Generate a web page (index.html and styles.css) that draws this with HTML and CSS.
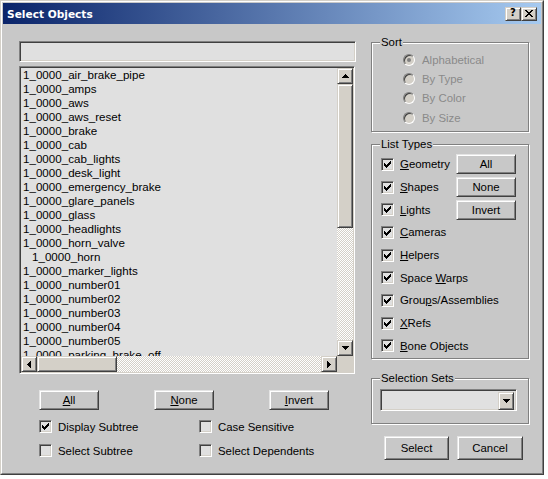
FILE: index.html
```html
<!DOCTYPE html>
<html>
<head>
<meta charset="utf-8">
<title>Select Objects</title>
<link rel="stylesheet" href="styles.css">
</head>
<body>
<div class="window">
  <div class="frame">
    <div class="titlebar">
      <span class="title">Select Objects</span>
      <span class="tbtn help">?</span>
      <span class="tbtn close"><svg width="8" height="7" viewBox="0 0 8 7"><path d="M0 0h2v1H0zM6 0h2v1H6zM1 1h2v1H1zM5 1h2v1H5zM2 2h4v1H2zM3 3h2v1H3zM2 4h4v1H2zM1 5h2v1H1zM5 5h2v1H5zM0 6h2v1H0zM6 6h2v1H6z" fill="#000"/></svg></span>
    </div>
    <div class="body">
      <div class="leftcol">
        <div class="edit filter"></div>
        <div class="listbox">
          <div class="items">
            <div class="item">1_0000_air_brake_pipe</div>
            <div class="item">1_0000_amps</div>
            <div class="item">1_0000_aws</div>
            <div class="item">1_0000_aws_reset</div>
            <div class="item">1_0000_brake</div>
            <div class="item">1_0000_cab</div>
            <div class="item">1_0000_cab_lights</div>
            <div class="item">1_0000_desk_light</div>
            <div class="item">1_0000_emergency_brake</div>
            <div class="item">1_0000_glare_panels</div>
            <div class="item">1_0000_glass</div>
            <div class="item">1_0000_headlights</div>
            <div class="item">1_0000_horn_valve</div>
            <div class="item child">1_0000_horn</div>
            <div class="item">1_0000_marker_lights</div>
            <div class="item">1_0000_number01</div>
            <div class="item">1_0000_number02</div>
            <div class="item">1_0000_number03</div>
            <div class="item">1_0000_number04</div>
            <div class="item">1_0000_number05</div>
            <div class="item">1_0000_parking_brake_off</div>
          </div>
          <div class="vscroll">
            <div class="sbtn"><svg width="7" height="4" viewBox="0 0 7 4"><path d="M3 0h1v1H3zM2 1h3v1H2zM1 2h5v1H1zM0 3h7v1H0z" fill="#000"/></svg></div>
            <div class="thumb vthumb"></div>
            <div class="track"></div>
            <div class="sbtn"><svg width="7" height="4" viewBox="0 0 7 4"><path d="M0 0h7v1H0zM1 1h5v1H1zM2 2h3v1H2zM3 3h1v1H3z" fill="#000"/></svg></div>
          </div>
          <div class="hscroll">
            <div class="sbtn"><svg width="4" height="7" viewBox="0 0 4 7"><path d="M3 0h1v7H3zM2 1h1v5H2zM1 2h1v3H1zM0 3h1v1H0z" fill="#000"/></svg></div>
            <div class="thumb hthumb"></div>
            <div class="track"></div>
            <div class="sbtn"><svg width="4" height="7" viewBox="0 0 4 7"><path d="M0 0h1v7H0zM1 1h1v5H1zM2 2h1v3H2zM3 3h1v1H3z" fill="#000"/></svg></div>
          </div>
          <div class="corner"></div>
        </div>
        <div class="btnrow">
          <button class="btn small"><u>A</u>ll</button>
          <button class="btn small"><u>N</u>one</button>
          <button class="btn small"><u>I</u>nvert</button>
        </div>
        <div class="opts">
          <label class="chk"><span class="box"><svg width="7" height="7" viewBox="0 0 7 7"><path d="M0 2h1v3H0zM1 3h1v3H1zM2 4h1v3H2zM3 3h1v3H3zM4 2h1v3H4zM5 1h1v3H5zM6 0h1v3H6z" fill="#000"/></svg></span>Display Subtree</label>
          <label class="chk"><span class="box"></span>Case Sensitive</label>
          <label class="chk"><span class="box"></span>Select Subtree</label>
          <label class="chk"><span class="box"></span>Select Dependents</label>
        </div>
      </div>
      <div class="rightcol">
        <fieldset class="group sort">
          <legend>Sort</legend>
          <div class="sort-body">
            <div class="radio-row"><span class="radio on"><span class="dot"></span></span>Alphabetical</div>
            <div class="radio-row"><span class="radio"></span>By Type</div>
            <div class="radio-row"><span class="radio"></span>By Color</div>
            <div class="radio-row"><span class="radio"></span>By Size</div>
          </div>
        </fieldset>
        <fieldset class="group types">
          <legend>List Types</legend>
          <div class="types-body">
            <label class="chk"><span class="box"><svg width="7" height="7" viewBox="0 0 7 7"><path d="M0 2h1v3H0zM1 3h1v3H1zM2 4h1v3H2zM3 3h1v3H3zM4 2h1v3H4zM5 1h1v3H5zM6 0h1v3H6z" fill="#000"/></svg></span><span><u>G</u>eometry</span></label>
            <button class="btn side">All</button>
            <label class="chk"><span class="box"><svg width="7" height="7" viewBox="0 0 7 7"><path d="M0 2h1v3H0zM1 3h1v3H1zM2 4h1v3H2zM3 3h1v3H3zM4 2h1v3H4zM5 1h1v3H5zM6 0h1v3H6z" fill="#000"/></svg></span><span><u>S</u>hapes</span></label>
            <button class="btn side">None</button>
            <label class="chk"><span class="box"><svg width="7" height="7" viewBox="0 0 7 7"><path d="M0 2h1v3H0zM1 3h1v3H1zM2 4h1v3H2zM3 3h1v3H3zM4 2h1v3H4zM5 1h1v3H5zM6 0h1v3H6z" fill="#000"/></svg></span><span><u>L</u>ights</span></label>
            <button class="btn side">Invert</button>
            <label class="chk wide"><span class="box"><svg width="7" height="7" viewBox="0 0 7 7"><path d="M0 2h1v3H0zM1 3h1v3H1zM2 4h1v3H2zM3 3h1v3H3zM4 2h1v3H4zM5 1h1v3H5zM6 0h1v3H6z" fill="#000"/></svg></span><span><u>C</u>ameras</span></label>
            <label class="chk wide"><span class="box"><svg width="7" height="7" viewBox="0 0 7 7"><path d="M0 2h1v3H0zM1 3h1v3H1zM2 4h1v3H2zM3 3h1v3H3zM4 2h1v3H4zM5 1h1v3H5zM6 0h1v3H6z" fill="#000"/></svg></span><span><u>H</u>elpers</span></label>
            <label class="chk wide"><span class="box"><svg width="7" height="7" viewBox="0 0 7 7"><path d="M0 2h1v3H0zM1 3h1v3H1zM2 4h1v3H2zM3 3h1v3H3zM4 2h1v3H4zM5 1h1v3H5zM6 0h1v3H6z" fill="#000"/></svg></span><span>Space <u>W</u>arps</span></label>
            <label class="chk wide"><span class="box"><svg width="7" height="7" viewBox="0 0 7 7"><path d="M0 2h1v3H0zM1 3h1v3H1zM2 4h1v3H2zM3 3h1v3H3zM4 2h1v3H4zM5 1h1v3H5zM6 0h1v3H6z" fill="#000"/></svg></span><span>Grou<u>p</u>s/Assemblies</span></label>
            <label class="chk wide"><span class="box"><svg width="7" height="7" viewBox="0 0 7 7"><path d="M0 2h1v3H0zM1 3h1v3H1zM2 4h1v3H2zM3 3h1v3H3zM4 2h1v3H4zM5 1h1v3H5zM6 0h1v3H6z" fill="#000"/></svg></span><span><u>X</u>Refs</span></label>
            <label class="chk wide"><span class="box"><svg width="7" height="7" viewBox="0 0 7 7"><path d="M0 2h1v3H0zM1 3h1v3H1zM2 4h1v3H2zM3 3h1v3H3zM4 2h1v3H4zM5 1h1v3H5zM6 0h1v3H6z" fill="#000"/></svg></span><span><u>B</u>one Objects</span></label>
          </div>
        </fieldset>
        <fieldset class="group sets">
          <legend>Selection Sets</legend>
          <div class="sets-body">
            <div class="combo">
              <div class="combo-text"></div>
              <div class="sbtn combo-btn"><svg width="7" height="4" viewBox="0 0 7 4"><path d="M0 0h7v1H0zM1 1h5v1H1zM2 2h3v1H2zM3 3h1v1H3z" fill="#000"/></svg></div>
            </div>
          </div>
        </fieldset>
        <div class="okrow">
          <button class="btn big">Select</button>
          <button class="btn big cancel">Cancel</button>
        </div>
      </div>
    </div>
  </div>
</div>
</body>
</html>
```

FILE: styles.css
```css
* { box-sizing: border-box; }
html, body { margin: 0; padding: 0; background: #ffffff; }
body {
  font-family: "Liberation Sans", Arial, sans-serif;
  font-size: 11.4px;
  color: #000;
}
u { text-decoration: underline; text-underline-offset: 1px; }

.window {
  width: 544px;
  height: 475px;
  background: #c8c8c8;
  border: 1px solid;
  border-color: #d4d0c8 #404040 #404040 #d4d0c8;
}
.frame {
  height: 100%;
  border: 1px solid;
  border-color: #ffffff #808080 #808080 #ffffff;
  padding: 1px;
  display: flex;
  flex-direction: column;
}

/* title bar */
.titlebar {
  height: 21px;
  flex: none;
  background: linear-gradient(to right, #0a246a, #a6caf0);
  display: flex;
  align-items: center;
  padding: 0 4px 0 4px;
}
.title {
  flex: 1;
  color: #fff;
  font-family: "DejaVu Sans", sans-serif;
  font-weight: bold;
  font-size: 10.6px;
}
.tbtn {
  width: 16px;
  height: 14px;
  background: #d4d0c8;
  border: 1px solid;
  border-color: #d4d0c8 #404040 #404040 #d4d0c8;
  box-shadow: inset 1px 1px #fff, inset -1px -1px #808080;
  display: flex;
  align-items: center;
  justify-content: center;
  font-family: "DejaVu Sans", sans-serif;
  font-weight: bold;
  font-size: 10px;
  line-height: 1;
}
.help { padding-bottom: 1px; }
.close { margin-left: 0; }

/* body */
.body {
  flex: 1;
  display: flex;
  align-items: flex-start;
  padding-left: 16px;
}
.leftcol {
  width: 337px;
  margin-top: 17px;
  display: flex;
  flex-direction: column;
}
.rightcol {
  width: 158px;
  margin-left: 15px;
  margin-top: 11px;
  display: flex;
  flex-direction: column;
}

/* sunken fields */
.edit, .listbox, .combo {
  border: 1px solid;
  border-color: #808080 #fff #fff #808080;
  box-shadow: inset 1px 1px #404040, inset -1px -1px #d4d0c8;
  background: #e0e0e0;
}
.filter { height: 21px; width: 337px; }

.listbox {
  margin-top: 4px;
  width: 336px;
  height: 308px;
  padding: 1px;
  display: grid;
  grid-template-columns: 316px 16px;
  grid-template-rows: 288px 16px;
}
.items {
  overflow: hidden;
  padding-left: 2px;
  font-size: 11.6px;
}
.item { height: 14px; line-height: 14px; white-space: nowrap; }
.item.child { padding-left: 9px; }

.vscroll { display: flex; flex-direction: column; }
.hscroll { display: flex; }
.sbtn {
  flex: none;
  width: 16px;
  height: 16px;
  background: #d4d0c8;
  border: 1px solid;
  border-color: #d4d0c8 #404040 #404040 #d4d0c8;
  box-shadow: inset 1px 1px #fff, inset -1px -1px #808080;
  display: flex;
  align-items: center;
  justify-content: center;
}
.sbtn svg { display: block; }
.thumb {
  flex: none;
  background: #d4d0c8;
  border: 1px solid;
  border-color: #d4d0c8 #404040 #404040 #d4d0c8;
  box-shadow: inset 1px 1px #fff, inset -1px -1px #808080;
}
.vthumb { height: 144px; }
.hthumb { width: 80px; }
.track {
  flex: 1;
  background-color: #d4d0c8;
  background-image: repeating-conic-gradient(#ffffff 0 25%, #d4d0c8 0 50%);
  background-size: 2px 2px;
}
.corner { background: #d4d0c8; }

/* push buttons */
.btn {
  font: inherit;
  color: #000;
  background: #c8c8c8;
  border: 1px solid;
  border-color: #e4e4e4 #404040 #404040 #e4e4e4;
  box-shadow: inset 1px 1px #fff, inset -1px -1px #808080;
  padding: 0;
  margin: 0;
  display: flex;
  align-items: center;
  justify-content: center;
}
.btn.small { width: 60px; height: 20px; }
.btnrow {
  margin-top: 16px;
  padding-left: 20px;
  display: flex;
  gap: 55px;
}

/* checkboxes */
.chk {
  display: flex;
  align-items: center;
  white-space: nowrap;
}
.box {
  flex: none;
  width: 13px;
  height: 13px;
  border: 1px solid;
  border-color: #808080 #fff #fff #808080;
  box-shadow: inset 1px 1px #404040, inset -1px -1px #d4d0c8;
  background: #e0e0e0;
  display: flex;
  align-items: center;
  justify-content: center;
  margin-right: 6px;
}
.box svg { display: block; }

.opts {
  margin-top: 10px;
  padding-left: 20px;
  display: grid;
  grid-template-columns: 160px auto;
  grid-auto-rows: 13px;
  row-gap: 11px;
}

/* group boxes */
.group {
  margin: 0;
  padding: 0;
  min-width: 0;
  border: 1px solid #808080;
  box-shadow: inset 1px 1px #fff, 1px 1px #fff;
}
.group legend {
  margin-left: 8px;
  padding: 0 1px;
  line-height: 14px;
  background: #c8c8c8;
}

.sort-body {
  height: 82px;
  padding: 1px 0 0 31px;
}
.radio-row {
  height: 19.3px;
  display: flex;
  align-items: center;
  color: #8a8a8a;
}
.radio {
  flex: none;
  width: 12px;
  height: 12px;
  border-radius: 50%;
  border: 1px solid;
  border-color: #808080 #fff #fff #808080;
  box-shadow: inset 1px 1px #404040, inset -1px -1px #d4d0c8;
  background: #d4d0c8;
  margin-right: 7px;
  display: flex;
  align-items: center;
  justify-content: center;
}
.dot {
  width: 4px;
  height: 4px;
  border-radius: 50%;
  background: #808080;
}

.types { margin-top: 5px; }
.types-body {
  height: 207px;
  padding: 2px 0 0 9px;
  display: grid;
  grid-template-columns: 75px 60px;
  grid-auto-rows: 22.7px;
  align-items: center;
}
.chk.wide { grid-column: 1 / -1; }
.btn.side { width: 60px; height: 20px; }

.sets { margin-top: 12px; }
.sets-body {
  height: 38px;
  padding: 4px 0 0 8px;
}
.combo {
  width: 137px;
  height: 22px;
  padding: 2px;
  display: flex;
  justify-content: flex-end;
}
.combo-btn { width: 16px; height: 18px; }

.okrow {
  margin-top: 12px;
  padding-left: 13px;
  display: flex;
  gap: 8px;
}
.btn.big { width: 65px; height: 24px; }
.btn.cancel { width: 66px; }
```
